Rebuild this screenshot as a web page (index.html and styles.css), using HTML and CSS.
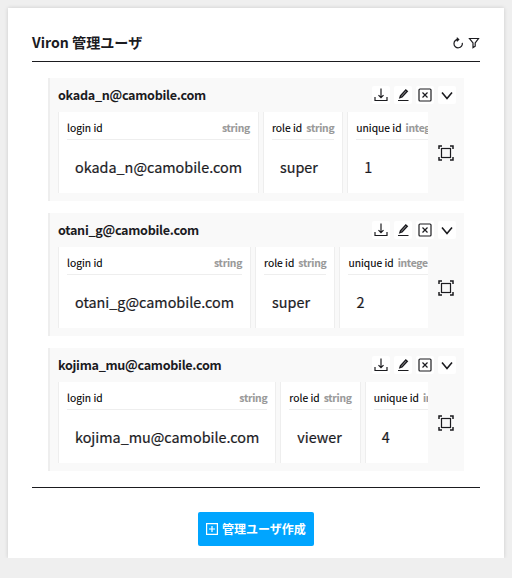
FILE: index.html
```
<!DOCTYPE html>
<html lang="ja">
<head>
<meta charset="utf-8">
<title>Viron 管理ユーザ</title>
<link rel="stylesheet" href="styles.css">
</head>
<body>
<svg class="defs" width="0" height="0">
  <symbol id="download" viewBox="0 0 18 18"><path d="M9 2.500v9M6.500 9.200 9 11.700l2.500-2.500M3 11v3.500h12V11"/></symbol>
  <symbol id="edit" viewBox="0 0 18 18"><path d="M4 14.500h10.500"/><path class="thick" d="M6.600 9.700 11.800 4l1.400 1.200-5.200 5.700-2 .6z"/></symbol>
  <symbol id="remove" viewBox="0 0 18 18"><rect x="3" y="3" width="12" height="12" rx="1"/><path d="M6.500 6.500l5 5M11.500 6.500l-5 5"/></symbol>
  <symbol id="chevron" viewBox="0 0 18 18"><path d="M4 6.500 9 12.500 14 6.500"/></symbol>
  <symbol id="frame" viewBox="0 0 16 16"><path d="M1 4V1h3M12 1h3v3M15 12v3h-3M4 15H1v-3"/><rect class="thin" x="3.500" y="3.500" width="9" height="9"/></symbol>
</svg>
<main class="card">
  <header class="card-head">
    <h1>Viron 管理ユーザ</h1>
    <div class="head-tools">
      <svg viewBox="0 0 12 12"><path d="M10.300 5.800A4.200 4.200 0 1 1 6.500 2.400M4.700.7l2 1.700-1.900 1.800"/></svg>
      <svg viewBox="0 0 12 12"><path d="M1.500 1.500h9L7.200 6v3.200L5 10.700V6z"/></svg>
    </div>
  </header>
  <div class="list">
    <section class="item">
      <div class="item-head">
        <h2>okada_n@camobile.com</h2>
        <div class="tools"><svg><use href="#download"/></svg><svg><use href="#edit"/></svg><svg><use href="#remove"/></svg><svg class="bold"><use href="#chevron"/></svg></div>
      </div>
      <div class="item-body">
        <div class="cells">
          <div class="cell"><div class="label">login id <b>string</b></div><div class="value">okada_n@camobile.com</div></div>
          <div class="cell"><div class="label">role id <b>string</b></div><div class="value">super</div></div>
          <div class="cell"><div class="label">unique id <b>integer</b></div><div class="value">1</div></div>
        </div>
        <svg class="expand"><use href="#frame"/></svg>
      </div>
    </section>
    <section class="item">
      <div class="item-head">
        <h2>otani_g@camobile.com</h2>
        <div class="tools"><svg><use href="#download"/></svg><svg><use href="#edit"/></svg><svg><use href="#remove"/></svg><svg class="bold"><use href="#chevron"/></svg></div>
      </div>
      <div class="item-body">
        <div class="cells">
          <div class="cell"><div class="label">login id <b>string</b></div><div class="value">otani_g@camobile.com</div></div>
          <div class="cell"><div class="label">role id <b>string</b></div><div class="value">super</div></div>
          <div class="cell"><div class="label">unique id <b>integer</b></div><div class="value">2</div></div>
        </div>
        <svg class="expand"><use href="#frame"/></svg>
      </div>
    </section>
    <section class="item">
      <div class="item-head">
        <h2>kojima_mu@camobile.com</h2>
        <div class="tools"><svg><use href="#download"/></svg><svg><use href="#edit"/></svg><svg><use href="#remove"/></svg><svg class="bold"><use href="#chevron"/></svg></div>
      </div>
      <div class="item-body">
        <div class="cells">
          <div class="cell"><div class="label">login id <b>string</b></div><div class="value">kojima_mu@camobile.com</div></div>
          <div class="cell"><div class="label">role id <b>string</b></div><div class="value">viewer</div></div>
          <div class="cell"><div class="label">unique id <b>integer</b></div><div class="value">4</div></div>
        </div>
        <svg class="expand"><use href="#frame"/></svg>
      </div>
    </section>
  </div>
  <footer class="card-foot">
    <button class="create"><svg viewBox="0 0 12 12"><path d="M.6.600h10.800v10.800H.6zM6 3v6M3 6h6"/></svg>管理ユーザ作成</button>
  </footer>
</main>
</body>
</html>
```
FILE: styles.css
```
* { box-sizing: border-box; }
body {
  margin: 0;
  padding: 8px;
  height: 578px;
  background: #efefef;
  color: #1b1b1f;
  font-family: "Noto Sans CJK JP", sans-serif;
  overflow: hidden;
}
svg {
  display: block;
  flex: none;
  fill: none;
  stroke: #1b1b1f;
  stroke-width: 1.2;
}
.defs { position: absolute; }
.card {
  height: 550px;
  padding: 16px 24px 12px;
  background: #fff;
  box-shadow: 0 0 4px rgba(0, 0, 0, .15);
  clip-path: inset(-8px -8px 0 -8px);
}
.card-head {
  display: flex;
  align-items: center;
  justify-content: space-between;
  height: 38px;
  border-bottom: 1px solid #1b1b1f;
}
h1, h2 { margin: 0; font-weight: 700; white-space: nowrap; }
h1 { font-size: 14.1px; line-height: 20px; padding-bottom: 2px; }
.head-tools { display: flex; gap: 4px; }
.head-tools svg { width: 12px; height: 12px; }
.list {
  display: flex;
  flex-direction: column;
  gap: 12px;
  padding: 16px;
}
.item {
  height: 123px;
  padding: 8px;
  border-left: 2px solid #eee;
  background: #f9f9f9;
}
.item-head {
  display: flex;
  align-items: center;
  justify-content: space-between;
  height: 18px;
  margin-bottom: 8px;
}
h2 { font-size: 12.6px; line-height: 18px; letter-spacing: -.29px; }
.tools { display: flex; gap: 4px; }
.tools svg { width: 18px; height: 18px; background: #fff; border-radius: 2px; }
.tools .bold { stroke-width: 1.600; }
.thick { stroke-width: 1.500; }
.item-body { display: flex; align-items: center; }
.cells {
  display: flex;
  gap: 4px;
  width: 370px;
  height: 81px;
  overflow: hidden;
}
.cell {
  flex: none;
  padding: 8px;
  border: solid #eee;
  border-width: 0 1px;
  background: #fff;
  white-space: nowrap;
}
.label {
  display: flex;
  justify-content: space-between;
  gap: 4px;
  height: 20px;
  border-bottom: 1px solid #eee;
  font-size: 10.3px;
  line-height: 16px;
  color: #000;
  -webkit-text-stroke: .1px;
}
.label b { color: #999; font-size: 10.3px; letter-spacing: -.25px; }
.value {
  padding: 16px 8px;
  font-size: 14.38px;
  line-height: 21px;
  -webkit-text-stroke: .2px;
}
.expand { width: 16px; height: 16px; margin-left: 10px; stroke-width: 1.500; }
.thin { stroke-width: 1.200; }
.card-foot {
  display: flex;
  justify-content: center;
  padding-top: 24px;
  border-top: 1px solid #1b1b1f;
}
.create {
  display: flex;
  align-items: center;
  justify-content: center;
  gap: 4px;
  width: 116px;
  height: 34px;
  padding: 0;
  border: 0;
  border-radius: 2px;
  background: #00a5ff;
  color: #fff;
  font: 700 12px/18px "Noto Sans CJK JP", sans-serif;
  white-space: nowrap;
}
.create svg { width: 12px; height: 12px; stroke: #fff; }
```
